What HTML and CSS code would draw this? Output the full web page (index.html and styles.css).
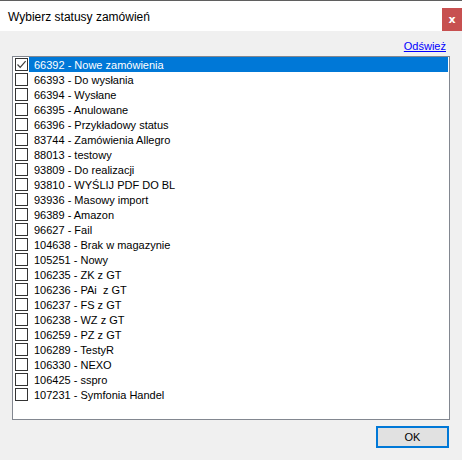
FILE: index.html
```html
<!DOCTYPE html>
<html lang="pl">
<head>
    <meta charset="UTF-8">
    <title>Wybierz statusy zamówień</title>
    <link rel="stylesheet" href="styles.css">
</head>
<body>
    <div class="window">
        <div class="titlebar">
            <span class="title">Wybierz statusy zamówień</span>
            <button class="close">x</button>
        </div>
        <div class="client">
            <div class="toolbar">
                <a href="#" class="refresh">Odśwież</a>
            </div>
            <ul class="checklist">
                <li class="item selected"><span class="box checked"><svg viewBox="0 0 11 11" width="11" height="11"><path d="M1.5 5.5 L4.2 8.3 L9.6 2.2" fill="none" stroke="#3c3c3c" stroke-width="1.2"/></svg></span><span class="label">66392 - Nowe zamówienia</span></li>
                <li class="item"><span class="box"></span><span class="label">66393 - Do wysłania</span></li>
                <li class="item"><span class="box"></span><span class="label">66394 - Wysłane</span></li>
                <li class="item"><span class="box"></span><span class="label">66395 - Anulowane</span></li>
                <li class="item"><span class="box"></span><span class="label">66396 - Przykładowy status</span></li>
                <li class="item"><span class="box"></span><span class="label">83744 - Zamówienia Allegro</span></li>
                <li class="item"><span class="box"></span><span class="label">88013 - testowy</span></li>
                <li class="item"><span class="box"></span><span class="label">93809 - Do realizacji</span></li>
                <li class="item"><span class="box"></span><span class="label">93810 - WYŚLIJ PDF DO BL</span></li>
                <li class="item"><span class="box"></span><span class="label">93936 - Masowy import</span></li>
                <li class="item"><span class="box"></span><span class="label">96389 - Amazon</span></li>
                <li class="item"><span class="box"></span><span class="label">96627 - Fail</span></li>
                <li class="item"><span class="box"></span><span class="label">104638 - Brak w magazynie</span></li>
                <li class="item"><span class="box"></span><span class="label">105251 - Nowy</span></li>
                <li class="item"><span class="box"></span><span class="label">106235 - ZK z GT</span></li>
                <li class="item"><span class="box"></span><span class="label">106236 - PAi&nbsp; z GT</span></li>
                <li class="item"><span class="box"></span><span class="label">106237 - FS z GT</span></li>
                <li class="item"><span class="box"></span><span class="label">106238 - WZ z GT</span></li>
                <li class="item"><span class="box"></span><span class="label">106259 - PZ z GT</span></li>
                <li class="item"><span class="box"></span><span class="label">106289 - TestyR</span></li>
                <li class="item"><span class="box"></span><span class="label">106330 - NEXO</span></li>
                <li class="item"><span class="box"></span><span class="label">106425 - sspro</span></li>
                <li class="item"><span class="box"></span><span class="label">107231 - Symfonia Handel</span></li>
            </ul>
            <div class="buttons">
                <button class="ok">OK</button>
            </div>
        </div>
    </div>
</body>
</html>
```

FILE: styles.css
```css
body {
    margin: 0;
    font-family: "Liberation Sans", Arial, sans-serif;
    font-size: 11px;
}

.window {
    width: 462px;
    height: 460px;
    display: flex;
    flex-direction: column;
    border-top: 1px solid #5f5f5f;
    box-sizing: border-box;
    background: #f0f0f0;
}

.titlebar {
    height: 30px;
    background: #fff;
    display: flex;
    align-items: flex-end;
    justify-content: space-between;
}

.title {
    font-family: "Liberation Sans", Arial, sans-serif;
    font-size: 12px;
    color: #000;
    padding-left: 8px;
    align-self: center;
    margin-top: 2px;
}

.close {
    width: 20px;
    height: 23px;
    border: none;
    padding: 0;
    background: #c75050;
    color: #fff;
    font-family: "DejaVu Sans", sans-serif;
    font-weight: bold;
    font-size: 11px;
    line-height: 20px;
}

.client {
    flex: 1;
    display: flex;
    flex-direction: column;
    padding: 0 12px;
}

.toolbar {
    display: flex;
    justify-content: flex-end;
    padding: 9px 4px 0 0;
    height: 16px;
}

.refresh {
    color: #0000ff;
    text-decoration: underline;
    line-height: 13px;
}

.checklist {
    list-style: none;
    margin: 0;
    padding: 0 1px 0 2px;
    height: 362px;
    border: 1px solid #828790;
    background: #fff;
}

.item {
    display: flex;
    height: 15px;
}

.box {
    width: 11px;
    height: 11px;
    margin-top: 1px;
    border: 1px solid #333;
    background: #fff;
    display: flex;
    flex-shrink: 0;
}

.label {
    flex: 1;
    margin-left: 1px;
    padding-left: 5px;
    line-height: 16px;
    color: #000;
    white-space: pre;
}

.selected .label {
    background: #0078d7;
    color: #fff;
}

.buttons {
    display: flex;
    justify-content: flex-end;
    padding: 6px 1px 0 0;
}

.ok {
    width: 73px;
    height: 22px;
    border: 2px solid #0078d7;
    background: #e1e1e1;
    font-family: "Liberation Sans", Arial, sans-serif;
    font-size: 11px;
    color: #000;
    padding: 0;
}
```
